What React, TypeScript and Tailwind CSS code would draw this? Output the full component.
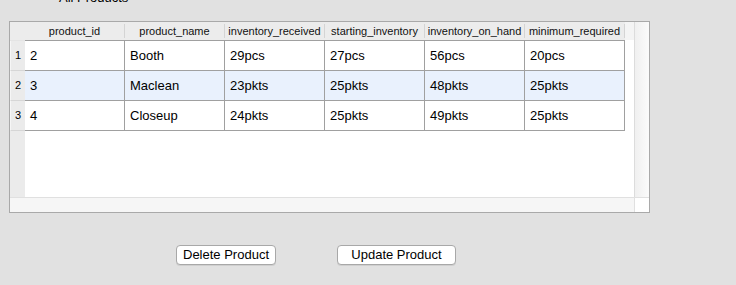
const columns = [
  'product_id',
  'product_name',
  'inventory_received',
  'starting_inventory',
  'inventory_on_hand',
  'minimum_required',
]

const rows = [
  ['2', 'Booth', '29pcs', '27pcs', '56pcs', '20pcs'],
  ['3', 'Maclean', '23pkts', '25pkts', '48pkts', '25pkts'],
  ['4', 'Closeup', '24pkts', '25pkts', '49pkts', '25pkts'],
]

export default function App() {
  return (
    <div
      className="h-[285px] w-full overflow-hidden bg-[#e1e1e1] text-black"
      style={{ fontFamily: '"Liberation Sans", Arial, sans-serif' }}
    >
      {/* Title, mostly scrolled out of view */}
      <div className="-mt-[10px] h-[31px] pl-[59px] text-[13px] leading-[15px]">All Products</div>

      {/* Table frame */}
      <div className="ml-[9px] flex h-[192px] w-[641px] flex-col border border-[#a9a9a9] bg-white">
        <div className="flex min-h-0 flex-1">
          {/* Table area */}
          <div className="flex w-[624px] flex-col">
            {/* Header */}
            <div className="flex h-[18px] bg-[#ececec]">
              <div className="w-[15px] shrink-0" />
              {columns.map((c) => (
                <div key={c} className="flex w-[100px] shrink-0 items-center py-[2px]">
                  <div className="flex-1 text-center text-[11px] leading-[14px] text-[#111]">{c}</div>
                  <div className="h-[14px] w-px bg-[#d4d4d4]" />
                </div>
              ))}
              <div className="flex-1 bg-[#f4f4f4]" />
            </div>

            {/* Body */}
            <div className="flex flex-1">
              <div className="flex w-[15px] shrink-0 flex-col bg-[#ebebeb]">
                <div className="h-px bg-[#e4e4e4]" />
                {rows.map((_, i) => (
                  <div
                    key={i}
                    className="flex h-[30px] items-center justify-center border-b border-[#d6d6d6] border-l border-l-[#f6f6f6] text-[11px]"
                  >
                    {i + 1}
                  </div>
                ))}
              </div>
              <div className="flex flex-1 flex-col">
                <div className="flex w-[600px] flex-col border-t border-[#a0a0a0]">
                  {rows.map((r, i) => (
                    <div
                      key={i}
                      className={`flex h-[30px] border-b border-[#a0a0a0] ${i === 1 ? 'bg-[#e9f1fd]' : 'bg-white'}`}
                    >
                      {r.map((v, j) => (
                        <div
                          key={j}
                          className="flex w-[100px] shrink-0 items-center border-r border-[#a0a0a0] pl-[5px] text-[13px]"
                        >
                          {v}
                        </div>
                      ))}
                    </div>
                  ))}
                </div>
              </div>
            </div>
          </div>

          {/* Vertical scrollbar track */}
          <div className="flex-1 bg-[#f7f7f7]" />
          <div className="w-[15px] border-l border-[#dcdcdc] bg-gradient-to-r from-[#f0f0f0] to-[#fbfbfb]" />
        </div>

        {/* Horizontal scrollbar track */}
        <div className="flex h-[15px] border-t border-[#e0e0e0]">
          <div className="flex-1 bg-[#f6f6f6]" />
          <div className="w-[15px] border-l border-[#e0e0e0] bg-white" />
        </div>
      </div>

      {/* Buttons */}
      <div className="mt-[32px] flex pl-[176px]">
        <button className="h-[20px] w-[100px] rounded-[4px] border border-[#a8a8a8] bg-white text-[13px] leading-[18px] shadow-[0_1px_0_rgba(0,0,0,0.08)]">
          Delete Product
        </button>
        <button className="ml-[61px] h-[20px] w-[119px] rounded-[4px] border border-[#a8a8a8] bg-white text-[13px] leading-[18px] shadow-[0_1px_0_rgba(0,0,0,0.08)]">
          Update Product
        </button>
      </div>
    </div>
  )
}
